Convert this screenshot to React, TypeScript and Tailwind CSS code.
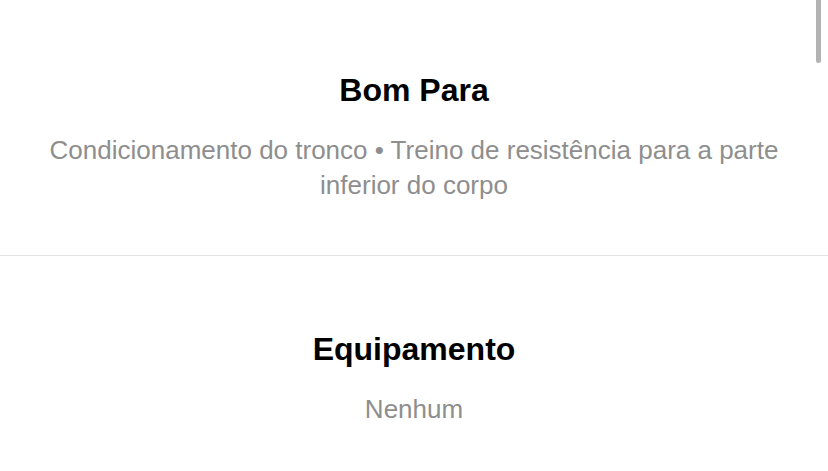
export default function App() {
  const sections = [
    {
      title: "Bom Para",
      body: "Condicionamento do tronco • Treino de resistência para a parte inferior do corpo",
    },
    { title: "Equipamento", body: "Nenhum" },
  ];

  return (
    <div
      className="relative w-full h-[471px] bg-white overflow-hidden"
      style={{ fontFamily: '"Liberation Sans", Arial, sans-serif' }}
    >
      {/* overlay scrollbar thumb */}
      <div className="absolute right-[7px] top-0 w-[5px] h-[63px] rounded-b-full bg-[#b3b3b3]" />

      {sections.map((s, i) => (
        <div
          key={s.title}
          className={
            i === 0
              ? "flex flex-col items-center px-[40px] pt-[72px] pb-[52px] border-b border-[#e3e3e3]"
              : "flex flex-col items-center px-[40px] pt-[75px]"
          }
        >
          <h2 className="text-[32px] leading-[36px] font-bold text-black text-center">
            {s.title}
          </h2>
          <p className="mt-[25px] text-[26px] leading-[35px] text-[#8e8e8e] text-center">
            {s.body}
          </p>
        </div>
      ))}
    </div>
  );
}
